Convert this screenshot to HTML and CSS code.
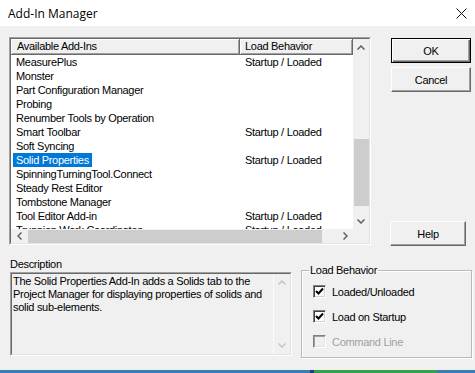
FILE: index.html
```html
<!DOCTYPE html>
<html lang="en">
<head>
    <meta charset="UTF-8">
    <title>Add-In Manager</title>
    <link rel="stylesheet" href="styles.css">
</head>
<body>
    <div class="window">
        <div class="titlebar">
            <span class="title">Add-In Manager</span>
            <svg class="close" width="11" height="11" viewBox="0 0 11 11">
                <path d="M0.5 0.5 L10.5 10.5 M10.5 0.5 L0.5 10.5" stroke="#111" stroke-width="1" fill="none"/>
            </svg>
        </div>

        <div class="dialog">
            <div class="top">
                <div class="listbox">
                    <div class="listbox-inner">
                        <div class="list-main">
                            <div class="list-view">
                                <div class="header">
                                    <div class="hcell c1">Available Add-Ins</div>
                                    <div class="hcell c2">Load Behavior</div>
                                </div>
                                <div class="row"><span class="c1"><span class="name">MeasurePlus</span></span><span class="c2">Startup / Loaded</span></div>
                                <div class="row"><span class="c1"><span class="name">Monster</span></span><span class="c2"></span></div>
                                <div class="row"><span class="c1"><span class="name">Part Configuration Manager</span></span><span class="c2"></span></div>
                                <div class="row"><span class="c1"><span class="name">Probing</span></span><span class="c2"></span></div>
                                <div class="row"><span class="c1"><span class="name">Renumber Tools by Operation</span></span><span class="c2"></span></div>
                                <div class="row"><span class="c1"><span class="name">Smart Toolbar</span></span><span class="c2">Startup / Loaded</span></div>
                                <div class="row"><span class="c1"><span class="name">Soft Syncing</span></span><span class="c2"></span></div>
                                <div class="row sel"><span class="c1"><span class="name">Solid Properties</span></span><span class="c2">Startup / Loaded</span></div>
                                <div class="row"><span class="c1"><span class="name">SpinningTurningTool.Connect</span></span><span class="c2"></span></div>
                                <div class="row"><span class="c1"><span class="name">Steady Rest Editor</span></span><span class="c2"></span></div>
                                <div class="row"><span class="c1"><span class="name">Tombstone Manager</span></span><span class="c2"></span></div>
                                <div class="row"><span class="c1"><span class="name">Tool Editor Add-in</span></span><span class="c2">Startup / Loaded</span></div>
                                <div class="row"><span class="c1"><span class="name">Trunnion Work Coordinates</span></span><span class="c2">Startup / Loaded</span></div>
                            </div>
                            <div class="vscroll">
                                <div class="arrow">
                                    <svg width="8" height="5" viewBox="0 0 8 5"><polyline points="0.5,4.5 4,1 7.5,4.5" stroke="#606060" stroke-width="1.5" fill="none"/></svg>
                                </div>
                                <div class="vthumb"></div>
                                <div class="track"></div>
                                <div class="arrow">
                                    <svg width="8" height="5" viewBox="0 0 8 5"><polyline points="0.5,0.5 4,4 7.5,0.5" stroke="#606060" stroke-width="1.5" fill="none"/></svg>
                                </div>
                            </div>
                        </div>
                        <div class="hscroll-row">
                            <div class="hscroll">
                                <div class="harrow">
                                    <svg width="5" height="8" viewBox="0 0 5 8"><polyline points="4.5,0.5 1,4 4.5,7.5" stroke="#606060" stroke-width="1.5" fill="none"/></svg>
                                </div>
                                <div class="hthumb"></div>
                                <div class="track"></div>
                                <div class="harrow">
                                    <svg width="5" height="8" viewBox="0 0 5 8"><polyline points="0.5,0.5 4,4 0.5,7.5" stroke="#606060" stroke-width="1.5" fill="none"/></svg>
                                </div>
                            </div>
                            <div class="corner"></div>
                        </div>
                    </div>
                </div>

                <div class="buttons">
                    <button class="btn default">OK</button>
                    <button class="btn cancel">Cancel</button>
                    <button class="btn help">Help</button>
                </div>
            </div>

            <div class="bottom">
                <div class="desc">
                    <div class="desc-label">Description</div>
                    <div class="desc-box">
                        <div class="desc-inner">
                            <div class="desc-text">The Solid Properties Add-In adds a Solids tab to the<br>Project Manager for displaying properties of solids and<br>solid sub-elements.</div>
                            <div class="desc-scroll">
                                <svg width="8" height="5" viewBox="0 0 8 5"><polyline points="0.5,4.5 4,1 7.5,4.5" stroke="#c4c4c4" stroke-width="1.5" fill="none"/></svg>
                                <svg width="8" height="5" viewBox="0 0 8 5"><polyline points="0.5,0.5 4,4 7.5,0.5" stroke="#c4c4c4" stroke-width="1.5" fill="none"/></svg>
                            </div>
                        </div>
                    </div>
                </div>

                <fieldset class="group">
                    <legend>Load Behavior</legend>
                    <div class="check">
                        <span class="box"><svg width="9" height="9" viewBox="0 0 9 9"><polyline points="1,4 3.5,6.5 8,1.5" stroke="#000" stroke-width="2" fill="none"/></svg></span>
                        <span class="label">Loaded/Unloaded</span>
                    </div>
                    <div class="check">
                        <span class="box"><svg width="9" height="9" viewBox="0 0 9 9"><polyline points="1,4 3.5,6.5 8,1.5" stroke="#000" stroke-width="2" fill="none"/></svg></span>
                        <span class="label">Load on Startup</span>
                    </div>
                    <div class="check disabled">
                        <span class="box"></span>
                        <span class="label">Command Line</span>
                    </div>
                </fieldset>
            </div>
        </div>

        <div class="taskbar"></div>
    </div>
</body>
</html>
```

FILE: styles.css
```css
body {
    margin: 0;
    font-family: "Liberation Sans", Arial, sans-serif;
    font-size: 11px;
    letter-spacing: -0.3px;
    color: #000;
    background: #f0f0f0;
}

.window {
    width: 475px;
    height: 373px;
    display: flex;
    flex-direction: column;
    overflow: hidden;
}

/* title bar */
.titlebar {
    height: 26px;
    flex: none;
    background: #fff;
    display: flex;
    align-items: center;
    justify-content: space-between;
    padding: 0 8px 0 8px;
}

.title {
    font-family: "Open Sans", "Noto Sans", sans-serif;
    font-size: 12px;
    letter-spacing: 0;
}

.dialog {
    flex: 1;
    background: #f0f0f0;
}

.top {
    display: flex;
    padding: 11px 0 0 9px;
}

/* list box with columns */
.listbox {
    width: 362px;
    height: 208px;
    box-sizing: border-box;
    border: 1px solid;
    border-color: #a0a0a0 #fff #fff #a0a0a0;
}

.listbox-inner {
    height: 100%;
    box-sizing: border-box;
    border: 1px solid;
    border-color: #696969 #e3e3e3 #e3e3e3 #696969;
    display: flex;
    flex-direction: column;
}

.list-main {
    flex: 1;
    min-height: 0;
    display: flex;
}

.list-view {
    flex: 1;
    overflow: hidden;
    background: #fff;
}

.header {
    display: flex;
    height: 16px;
}

.hcell {
    box-sizing: border-box;
    height: 16px;
    line-height: 15px;
    background: #f0f0f0;
    border-right: 1px solid #696969;
    border-bottom: 1px solid #696969;
    box-shadow: inset 1px 1px #fff, inset -1px -1px #a0a0a0;
    white-space: nowrap;
}

.c1 {
    width: 229px;
    flex: none;
}

.hcell.c1 {
    padding-left: 6px;
}

.hcell.c2 {
    flex: 1;
    padding-left: 5px;
}

.row {
    display: flex;
    height: 14px;
    line-height: 14px;
    white-space: nowrap;
}

.row .c1 {
    padding-left: 2px;
    box-sizing: border-box;
}

.row .c2 {
    padding-left: 5px;
}

.name {
    display: inline-block;
    padding: 0 3px;
}

.row.sel .name {
    background: #0078d7;
    color: #fff;
}

/* scroll bars */
.vscroll {
    width: 16px;
    flex: none;
    display: flex;
    flex-direction: column;
    background: #f0f0f0;
}

.arrow {
    height: 16px;
    flex: none;
    display: flex;
    align-items: center;
    justify-content: center;
}

.vthumb {
    margin: 84px 0 0 1px;
    height: 67px;
    flex: none;
    background: #cdcdcd;
}

.track {
    flex: 1;
}

.hscroll-row {
    height: 14px;
    flex: none;
    display: flex;
}

.hscroll {
    flex: 1;
    display: flex;
    background: #f0f0f0;
}

.harrow {
    width: 16px;
    flex: none;
    display: flex;
    align-items: center;
    justify-content: center;
}

.hthumb {
    width: 294px;
    margin: 1px 0 0 1px;
    background: #cdcdcd;
}

.corner {
    width: 16px;
    background: #f0f0f0;
}

/* buttons */
.buttons {
    display: flex;
    flex-direction: column;
    margin: 1px 0 0 20px;
}

.btn {
    width: 80px;
    height: 25px;
    box-sizing: border-box;
    padding: 0;
    font-family: "Liberation Sans", Arial, sans-serif;
    font-size: 11px;
    letter-spacing: -0.3px;
    color: #000;
    background: #f0f0f0;
    border: 1px solid;
    border-color: #fff #696969 #696969 #fff;
    box-shadow: inset -1px -1px #a0a0a0;
}

.btn.default {
    border-color: #000;
    box-shadow: inset 1px 1px #fff, inset -1px -1px #696969, inset -2px -2px #a0a0a0;
}

.btn.cancel {
    margin-top: 4px;
}

.btn.help {
    width: 76px;
    margin: 129px 0 0 -1px;
}

/* description + group */
.bottom {
    display: flex;
    margin-top: 12px;
    padding-left: 10px;
}

.desc {
    width: 282px;
}

.desc-label {
    line-height: 13px;
    margin-bottom: 1px;
}

.desc-box {
    height: 84px;
    box-sizing: border-box;
    border: 1px solid;
    border-color: #a0a0a0 #fff #fff #a0a0a0;
}

.desc-inner {
    height: 100%;
    box-sizing: border-box;
    border: 1px solid;
    border-color: #696969 #e3e3e3 #e3e3e3 #696969;
    display: flex;
}

.desc-text {
    flex: 1;
    padding: 1px 0 0 1px;
    line-height: 13px;
    white-space: nowrap;
    overflow: hidden;
}

.desc-scroll {
    width: 16px;
    border-left: 1px solid #fbfbfb;
    display: flex;
    flex-direction: column;
    justify-content: space-between;
    align-items: center;
    padding: 6px 0 6px;
}

.group {
    width: 171px;
    height: 94px;
    box-sizing: border-box;
    margin: 6px 0 0 9px;
    padding: 8px 0 0 11px;
    border: 1px solid #b9b9b9;
    box-shadow: inset 1px 1px #fff, 1px 1px #fff;
}

.group legend {
    padding: 0 1px;
    margin-left: -4px;
    line-height: 13px;
}

.check {
    display: flex;
    align-items: center;
    height: 13px;
    margin-bottom: 12px;
}

.box {
    width: 13px;
    height: 13px;
    box-sizing: border-box;
    background: #fff;
    border: 1px solid;
    border-color: #808080 #fff #fff #808080;
    box-shadow: inset 1px 1px #404040, inset -1px -1px #d4d0c8;
    display: flex;
    align-items: center;
    justify-content: center;
}

.label {
    margin-left: 6px;
}

.check.disabled .box {
    background: #f0f0f0;
    box-shadow: inset 1px 1px #a0a0a0, inset -1px -1px #e3e3e3;
}

.check.disabled .label {
    color: #a0a0a0;
}

.taskbar {
    height: 3px;
    flex: none;
    background: linear-gradient(to right, #3b7cb4 0, #3b7cb4 310px, #1d3f8a 310px, #1d3f8a 314px, #3aa047 314px, #3aa047 437px, #3b7cb4 437px);
}
```
